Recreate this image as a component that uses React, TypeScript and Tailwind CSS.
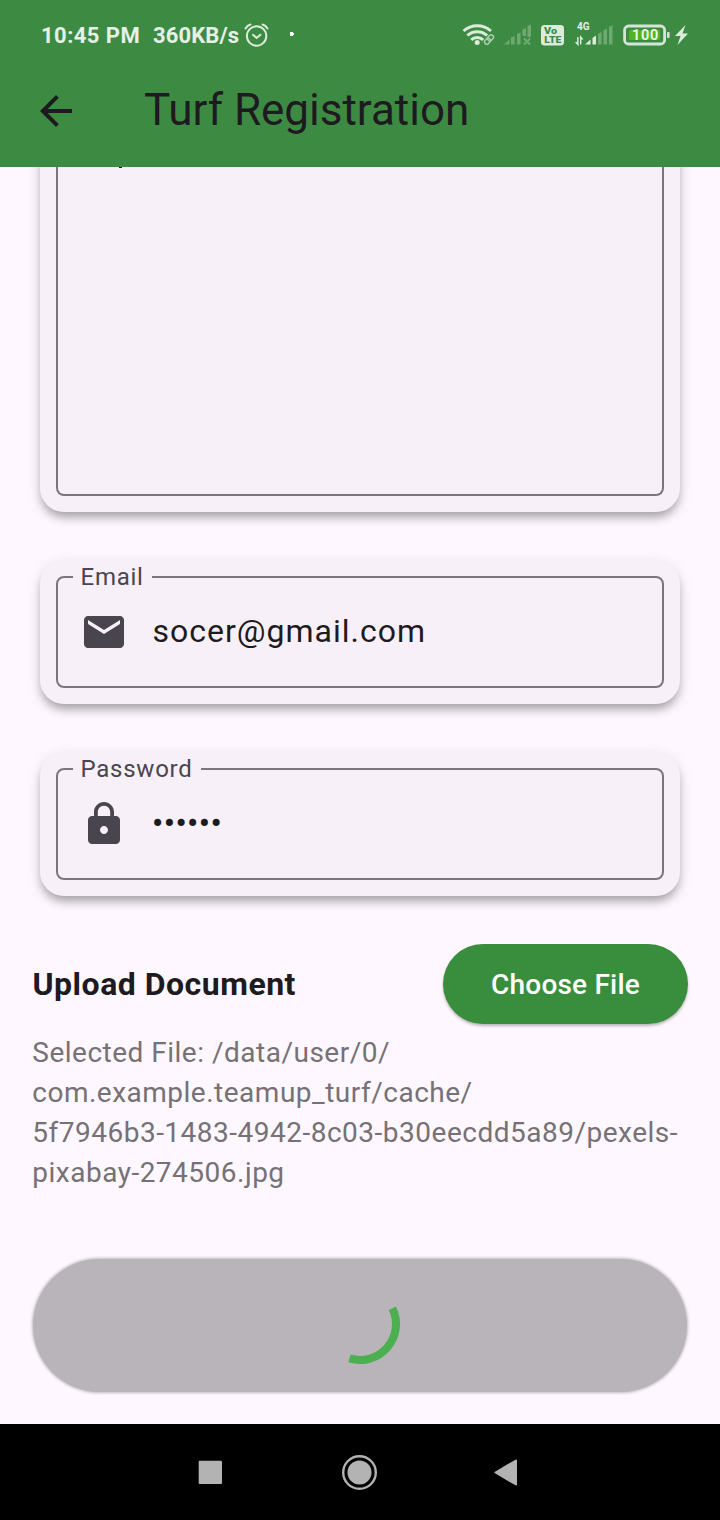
import React from "react";

function StatusBar() {
  return (
    <div className="flex h-[70px] w-full items-start">
      <div className="flex h-[70px] w-[104px] shrink-0 pt-px pl-[41px] text-[22px] leading-[70px] font-bold tracking-[0.45px] whitespace-nowrap text-[#e6f0e6]">
        10:45 PM
      </div>
      <div className="w-[140px] shrink-0 pt-px pl-[49px] text-[22px] leading-[70px] font-bold tracking-[0.1px] whitespace-nowrap text-[#e6f0e6]">
        360KB/s
      </div>
      <svg className="h-[70px] w-[476px] shrink-0" viewBox="244 0 476 70" fill="none">
        <g stroke="#dcebdc" strokeWidth="2" strokeLinecap="round">
          <circle cx="256.6" cy="36" r="9.7" />
          <path d="M253 34.8l3.6 3.2 3.8-3.2M245.5 28.5q1.8-3.2 5-4M262.5 24.5q3.2.8 5 4" />
        </g>
        <path d="M290 32h3v1h1v2h-1v1h-3z" fill="#fff" />
        <g stroke="#dcebdc" strokeWidth="3">
          <path d="M463.5 31a20.500 20.500 0 0 1 27.5 0" />
          <path d="M467.3 35.500a14.600 14.600 0 0 1 19.800 0" />
          <path d="M471.2 39.800a8.800 8.800 0 0 1 12 0" />
        </g>
        <circle cx="477.2" cy="42.400" r="2.500" fill="#dcebdc" />
        <g stroke="#a9cdab" strokeWidth="1.5" transform="rotate(-48 489 39.5)">
          <rect x="483.5" y="37.2" width="6.5" height="4.6" rx="2.3" />
          <rect x="488" y="37.2" width="6.5" height="4.6" rx="2.3" />
        </g>
        <g fill="#6ea971">
          <path d="M504 44.5l5.500-5v5zM511 37.5l3.500-1.5v8.5h-3.500zM517 34l3.500-1.5v12h-3.500zM522.500 29.5l3.500-1.5v8h-3.500zM527.500 26l3.500-1.5v12.500h-3.500z" />
        </g>
        <path d="M524 38.500l6 6M530 38.500l-6 6" stroke="#6ea971" strokeWidth="2.2" />
        <rect x="541" y="25" width="23" height="20.500" rx="3.500" fill="#dcebdc" />
        <text x="544" y="34" fontSize="8.800" fontWeight="900" fill="#3d8b42" textLength="13" lengthAdjust="spacingAndGlyphs">Vo</text>
        <text x="544.300" y="43.300" fontSize="8.800" fontWeight="900" fill="#3d8b42" textLength="17" lengthAdjust="spacingAndGlyphs">LTE</text>
        <text x="577" y="30.200" fontSize="10" fontWeight="700" fill="#e6f0e6">4G</text>
        <path d="M577.900 37v7.500l-2.300-2.500M580.700 44.500v-7.500l2 2.500" stroke="#dcebdc" strokeWidth="1.400" />
        <path d="M585 44.500l5.500-5v5zM592.500 38l3.500-2.500v9h-3.500z" fill="#dcebdc" />
        <path d="M598 34l3.500-2v12.500h-3.500zM603.500 30.500l3.500-2v16h-3.500zM609 27l3.500-2v19.500h-3.500z" fill="#6ea971" />
        <rect x="624.600" y="26" width="40" height="18" rx="4" stroke="#d3e5d4" strokeWidth="2.800" />
        <rect x="629" y="30" width="31" height="10" rx="1.500" fill="#4fb51f" />
        <rect x="667" y="32" width="2.600" height="6" rx="1" fill="#d3e5d4" />
        <text x="645.600" y="40" textAnchor="middle" fontSize="14.500" fontWeight="600" fill="#f0f7ee" letterSpacing=".7">100</text>
        <path d="M685.500 25l-10.500 11h5.500l-3 9 10.500-11.500h-5.500z" fill="#dcebdc" />
      </svg>
    </div>
  );
}

function AppBar() {
  return (
    <div className="flex h-[97px] w-full items-start">
      <svg className="mt-[17px] ml-8 h-12 w-12" viewBox="0 0 24 24" fill="#1d1b20">
        <path d="M20 11H7.830l5.590-5.590L12 4l-8 8 8 8 1.410-1.410L7.830 13H20v-2z" />
      </svg>
      <h1 className="ml-16 text-[44px] leading-[80px] font-normal whitespace-nowrap text-[#1d1b20]">
        Turf Registration
      </h1>
    </div>
  );
}

const cardShadow =
  "shadow-[0_7px_10px_-2px_rgba(0,0,0,0.28),0_4px_14px_0_rgba(0,0,0,0.12)]";

function Field({ label, icon, children }: { label: string; icon: React.ReactNode; children: React.ReactNode }) {
  return (
    <div className={`mx-10 h-36 rounded-3xl bg-[#f7f0f8] px-4 pt-[5px] ${cardShadow}`}>
      <fieldset className="h-[123px] rounded-lg border-2 border-[#7a757f] pr-4 pl-[15px]">
        <legend className="h-6 pr-[8.5px] pl-[7.5px] text-[24px] leading-6 tracking-[0.75px] whitespace-nowrap text-[#49454f]">
          {label}
        </legend>
        <div className="flex h-[86px] items-center pl-[7px]">
          <svg className="h-12 w-12" viewBox="0 0 24 24" fill="#49454f">
            {icon}
          </svg>
          {children}
        </div>
      </fieldset>
    </div>
  );
}

export default function App() {
  return (
    <div className="flex h-[1520px] w-[720px] flex-col overflow-hidden bg-[#fef7ff] font-['Roboto',sans-serif]">
      <header className="relative z-10 h-[167px] shrink-0 bg-[#3d8b42]">
        <StatusBar />
        <AppBar />
      </header>

      <main className="flex h-[1257px] shrink-0 flex-col overflow-hidden">
        <div className={`mx-10 -mt-10 h-[385px] shrink-0 rounded-b-3xl bg-[#f7f0f8] px-4 pt-10 pb-4 ${cardShadow}`}>
          <div className="h-[329px] rounded-b-lg border-2 border-t-0 border-[#7a757f] pl-[61px]">
            <div className="h-px w-[3px] bg-[#1d1b20]" />
          </div>
        </div>

        <div className="mt-12 flex flex-col gap-12">
          <Field
            label="Email"
            icon={<path d="M20 4H4c-1.100 0-1.990.9-1.990 2L2 18c0 1.100.9 2 2 2h16c1.100 0 2-.9 2-2V6c0-1.100-.9-2-2-2zm0 4l-8 5-8-5V6l8 5 8-5v2z" />}
          >
            <span className="pb-0.5 pl-[24.5px] text-[32px] leading-[48px] tracking-[1px] whitespace-nowrap text-[#1d1b20]">
              socer@gmail.com
            </span>
          </Field>
          <Field
            label="Password"
            icon={<path d="M18 8h-1V6c0-2.760-2.240-5-5-5S7 3.240 7 6v2H6c-1.100 0-2 .9-2 2v10c0 1.100.9 2 2 2h12c1.100 0 2-.9 2-2V10c0-1.100-.9-2-2-2zm-6 9c-1.100 0-2-.9-2-2s.9-2 2-2 2 .9 2 2-.9 2-2 2zm3.100-9H8.900V6c0-1.710 1.390-3.100 3.100-3.100 1.710 0 3.100 1.390 3.100 3.100v2z" />}
          >
            <span className="pb-0.5 pl-6 text-[32px] leading-[48px] font-medium tracking-[0.5px] whitespace-nowrap text-[#1d1b20]">
              ••••••
            </span>
          </Field>
        </div>

        <div className="mt-12 flex h-20 shrink-0 items-center justify-between px-8">
          <h2 className="pl-[0.5px] text-[32px] leading-[48px] font-bold tracking-[0.5px] whitespace-nowrap text-[#1d1b20]">
            Upload Document
          </h2>
          <button className="h-20 w-[245px] rounded-full bg-[#388e3c] pt-0.5 text-[28px] font-medium tracking-[0.2px] text-white shadow-[0_2px_3px_rgba(0,0,0,0.28)]">
            Choose File
          </button>
        </div>

        <p className="mt-[9px] h-40 shrink-0 pl-[32.25px] text-[28px] leading-10 tracking-[0.5px] whitespace-nowrap text-[#757175]">
          Selected File: /data/user/0/
          <br />
          com.example.teamup_turf/cache/
          <br />
          5f7946b3-1483-4942-8c03-b30eecdd5a89/pexels-
          <br />
          pixabay-274506.jpg
        </p>

        <div className="mx-[33px] mt-[66px] flex h-[133px] shrink-0 items-start justify-center rounded-full bg-[#b9b4ba] pt-[25px] shadow-[0_0_3px_1px_rgba(0,0,0,0.26)]">
          <svg className="h-20 w-20 overflow-visible" viewBox="-40 -40 80 80" fill="none">
            <path d="M32.360-15.780A36 36 0 0 1-10.530 34.430" stroke="#4caf50" strokeWidth="8" />
          </svg>
        </div>
      </main>

      <nav className="h-24 shrink-0 bg-black">
        <svg className="h-24 w-[720px]" viewBox="0 0 720 96">
          <rect x="198.700" y="36.700" width="23.300" height="23.300" rx="1" fill="#b3b3b3" />
          <circle cx="359.500" cy="48.500" r="16.300" fill="none" stroke="#b3b3b3" strokeWidth="2.400" />
          <circle cx="359.500" cy="48.500" r="12" fill="#b3b3b3" />
          <path d="M495.500 48.500l20.500-12v24z" fill="#b3b3b3" stroke="#b3b3b3" strokeWidth="2" strokeLinejoin="round" />
        </svg>
      </nav>
    </div>
  );
}
